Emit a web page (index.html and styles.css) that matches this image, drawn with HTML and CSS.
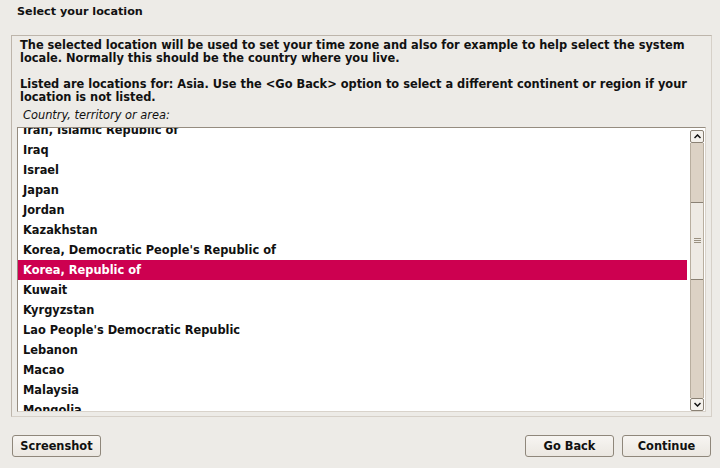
FILE: index.html
```html
<!DOCTYPE html>
<html>
<head>
<meta charset="utf-8">
<link rel="stylesheet" href="styles.css">
</head>
<body>
<div class="title">Select your location</div>
<div class="panel">
  <p class="desc">The selected location will be used to set your time zone and also for example to help select the system locale. Normally this should be the country where you live.</p>
  <p class="desc">Listed are locations for: Asia. Use the &lt;Go Back&gt; option to select a different continent or region if your location is not listed.</p>
  <div class="label">Country, territory or area:</div>
  <div class="listbox">
    <div class="viewport">
      <ul class="rows">
        <li>Iran, Islamic Republic of</li>
        <li>Iraq</li>
        <li>Israel</li>
        <li>Japan</li>
        <li>Jordan</li>
        <li>Kazakhstan</li>
        <li>Korea, Democratic People's Republic of</li>
        <li class="sel">Korea, Republic of</li>
        <li>Kuwait</li>
        <li>Kyrgyzstan</li>
        <li>Lao People's Democratic Republic</li>
        <li>Lebanon</li>
        <li>Macao</li>
        <li>Malaysia</li>
        <li>Mongolia</li>
      </ul>
    </div>
    <div class="scrollbar">
      <div class="sbtn"><svg width="7" height="5" viewBox="0 0 7 5"><path d="M0.5 4 L3.5 1 L6.5 4" fill="none" stroke="#111" stroke-width="1.5"/></svg></div>
      <div class="trough">
        <div class="thumb">
          <svg width="7" height="6" viewBox="0 0 7 6"><path d="M0 0.5H7M0 2.5H7M0 4.5H7" stroke="#9a9080" stroke-width="1"/></svg>
        </div>
      </div>
      <div class="sbtn"><svg width="7" height="5" viewBox="0 0 7 5"><path d="M0.5 1 L3.5 4 L6.5 1" fill="none" stroke="#111" stroke-width="1.5"/></svg></div>
    </div>
  </div>
</div>
<div class="buttons">
  <button class="btn">Screenshot</button>
  <div class="spacer"></div>
  <button class="btn">Go Back</button>
  <button class="btn">Continue</button>
</div>
</body>
</html>
```
FILE: styles.css
```css
html, body {
  margin: 0;
  padding: 0;
  background: #edebe7;
  width: 720px;
  height: 468px;
  overflow: hidden;
  font-family: "DejaVu Sans", sans-serif;
  font-weight: bold;
  font-size: 11.4px;
  color: #111;
}
.title {
  height: 24px;
  line-height: 24px;
  padding-left: 17px;
  font-size: 11.2px;
}
.panel {
  margin: 11px 8px 0 11px;
  border: 1px solid #bdb5ab;
  border-right-color: #d6d0c8;
  border-bottom-color: #d6d0c8;
  padding: 3px 5px 4px 5px;
  height: 382px;
  box-sizing: border-box;
  display: flex;
  flex-direction: column;
}
.desc {
  margin: 0 0 13px 0;
  padding-left: 3px;
  line-height: 13px;
}
.desc + .desc {
  margin-bottom: 0;
}
.label {
  font-weight: normal;
  font-style: italic;
  padding-left: 6px;
  line-height: 13px;
  margin-top: 5px;
  height: 18px;
}
.listbox {
  flex: 1;
  display: flex;
  background: #fff;
  border: 1px solid #958c80;
  border-right-color: #d9d3cb;
  border-bottom-color: #d9d3cb;
  overflow: hidden;
}
.viewport {
  flex: 1;
  overflow: hidden;
}
.rows {
  list-style: none;
  margin: -8px 0 0 0;
  padding: 0;
}
.rows li {
  height: 20px;
  line-height: 20px;
  padding-left: 5px;
  white-space: nowrap;
}
.rows li.sel {
  background: #cd0050;
  color: #fff;
}
.scrollbar {
  width: 14px;
  margin: 2px 1px 0 3px;
  display: flex;
  flex-direction: column;
}
.sbtn {
  height: 13px;
  box-sizing: border-box;
  border: 1px solid #8a8174;
  border-radius: 2px;
  background: #f4f1ec;
  display: flex;
  align-items: center;
  justify-content: center;
}
.trough {
  flex: 1;
  background: #dcd2c5;
  border-left: 1px solid #b8ae9f;
  border-right: 1px solid #b8ae9f;
  padding-top: 59px;
}
.thumb {
  height: 78px;
  box-sizing: border-box;
  background: #eeeae4;
  border-top: 1px solid #8a8174;
  border-bottom: 1px solid #8a8174;
  display: flex;
  align-items: center;
  justify-content: center;
}
.buttons {
  display: flex;
  margin: 18px 9px 0 12px;
  gap: 8px;
}
.spacer {
  flex: 1;
}
.btn {
  width: 89px;
  height: 22px;
  font-family: "DejaVu Sans", sans-serif;
  font-weight: bold;
  font-size: 11.4px;
  color: #111;
  background: linear-gradient(#f7f5f2, #ebe7e1);
  border: 1px solid #8f877b;
  border-radius: 3px;
  padding: 0;
}
```
